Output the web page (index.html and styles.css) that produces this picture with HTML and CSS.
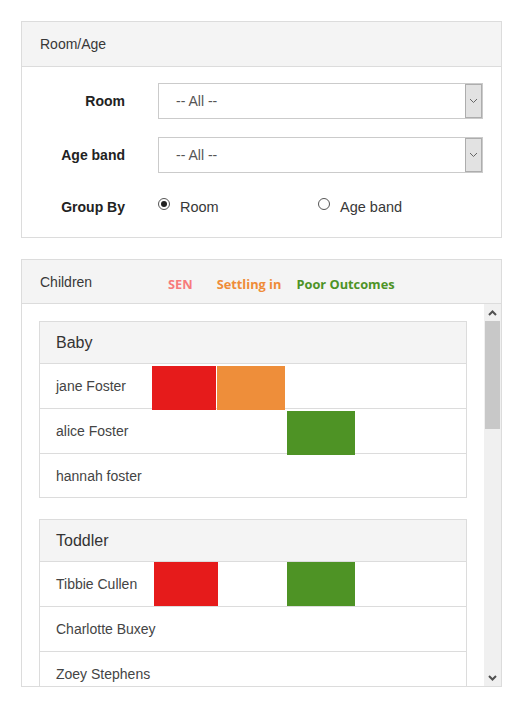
FILE: index.html
```html
<!DOCTYPE html>
<html>
<head>
<meta charset="utf-8">
<link rel="stylesheet" href="styles.css">
</head>
<body>
<div class="page">
  <section class="panel filters">
    <div class="panel-head">Room/Age</div>
    <div class="panel-body form">
      <div class="form-row">
        <label class="lbl">Room</label>
        <div class="select"><span class="select-val">-- All --</span><span class="select-btn"><svg width="9" height="6" viewBox="0 0 9 6"><path d="M1 1l3.5 3.5L8 1" fill="none" stroke="#666" stroke-width="1"/></svg></span></div>
      </div>
      <div class="form-row">
        <label class="lbl">Age band</label>
        <div class="select"><span class="select-val">-- All --</span><span class="select-btn"><svg width="9" height="6" viewBox="0 0 9 6"><path d="M1 1l3.5 3.5L8 1" fill="none" stroke="#666" stroke-width="1"/></svg></span></div>
      </div>
      <div class="form-row radio-row">
        <label class="lbl">Group By</label>
        <div class="radios">
          <span class="radio-opt"><span class="radio checked"></span>Room</span>
          <span class="radio-opt"><span class="radio"></span>Age band</span>
        </div>
      </div>
    </div>
  </section>

  <section class="panel children">
    <div class="panel-head children-head">
      <span class="head-title">Children</span>
      <span class="legend sen">SEN</span>
      <span class="legend settle">Settling in</span>
      <span class="legend po">Poor Outcomes</span>
    </div>
    <div class="scroll-body">
      <div class="scroll-content">
        <div class="group baby">
          <div class="group-head">Baby</div>
          <div class="row"><span class="name">jane Foster</span><span class="slot s-sen on"></span><span class="slot s-settle on"></span><span class="slot s-po"></span></div>
          <div class="row"><span class="name">alice Foster</span><span class="slot s-sen"></span><span class="slot s-settle"></span><span class="slot s-po on"></span></div>
          <div class="row"><span class="name">hannah foster</span></div>
        </div>
        <div class="group toddler">
          <div class="group-head">Toddler</div>
          <div class="row"><span class="name">Tibbie Cullen</span><span class="slot s-sen on"></span><span class="slot s-settle"></span><span class="slot s-po on"></span></div>
          <div class="row"><span class="name">Charlotte Buxey</span></div>
          <div class="row"><span class="name">Zoey Stephens</span></div>
        </div>
      </div>
      <div class="scrollbar">
        <div class="sb-btn"><svg width="9" height="6" viewBox="0 0 9 6"><path d="M1 5l3.5-3.5L8 5" fill="none" stroke="#505050" stroke-width="2"/></svg></div>
        <div class="sb-track"><div class="sb-thumb"></div></div>
        <div class="sb-btn"><svg width="9" height="6" viewBox="0 0 9 6"><path d="M1 1l3.5 3.5L8 1" fill="none" stroke="#505050" stroke-width="2"/></svg></div>
      </div>
    </div>
  </section>
</div>
</body>
</html>
```

FILE: styles.css
```css
html, body {
  margin: 0;
  padding: 0;
  background: #fff;
}
body {
  font-family: "Liberation Sans", Arial, sans-serif;
  font-size: 14px;
  color: #333;
}
.page {
  padding: 21px 0 0 21px;
  width: 481px;
}
.panel {
  border: 1px solid #dcdcdc;
  background: #fff;
}
.panel-head {
  height: 44px;
  background: #f4f4f4;
  border-bottom: 1px solid #dcdcdc;
  padding-left: 18px;
  display: flex;
  align-items: center;
  color: #383838;
  font-size: 14px;
}

/* filter form */
.form {
  padding: 16px 18px 20px 0;
  display: flex;
  flex-direction: column;
  gap: 18px;
}
.form-row {
  display: grid;
  grid-template-columns: 103px 1fr;
  column-gap: 33px;
  align-items: center;
}
.lbl {
  text-align: right;
  font-weight: bold;
  color: #222;
  font-size: 14px;
}
.select {
  height: 34px;
  border: 1px solid #cbcbcb;
  display: flex;
  align-items: stretch;
  background: #fff;
}
.select-val {
  flex: 1;
  padding-left: 17px;
  display: flex;
  align-items: center;
  color: #555;
  font-size: 14px;
}
.select-btn {
  width: 15px;
  background: #e2e2e2;
  border: 1px solid #adadad;
  display: flex;
  align-items: center;
  justify-content: center;
}
.radio-row {
  margin-top: 6px;
  height: 20px;
}
.radios {
  display: flex;
  align-items: center;
}
.radio-opt {
  width: 160px;
  display: flex;
  align-items: center;
  color: #383838;
  font-size: 14.5px;
}
.radio {
  width: 12px;
  height: 12px;
  border: 1px solid #555;
  border-radius: 50%;
  margin-right: 10px;
  box-sizing: border-box;
  position: relative;
  top: -3px;
  background: #fff;
  display: flex;
  align-items: center;
  justify-content: center;
}
.radio.checked::after {
  content: "";
  width: 6px;
  height: 6px;
  border-radius: 50%;
  background: #222;
}

/* children panel */
.children {
  margin-top: 21px;
}
.children-head {
  height: 43px;
}
.head-title {
  width: 128px;
}
.legend {
  font-family: "Open Sans", sans-serif;
  font-weight: bold;
  font-size: 12.8px;
  padding-top: 5px;
}
.legend.sen { color: #f77b7b; margin-right: 24px; }
.legend.settle { color: #ef8c38; margin-right: 15px; }
.legend.po { color: #4d9326; }

.scroll-body {
  height: 382px;
  display: flex;
  overflow: hidden;
}
.scroll-content {
  flex: 1;
  padding: 17px 17px 0 17px;
  overflow: hidden;
}
.group {
  border: 1px solid #dcdcdc;
  margin-bottom: 21px;
}
.group-head {
  height: 41px;
  background: #f4f4f4;
  padding-left: 16px;
  display: flex;
  align-items: center;
  font-size: 16px;
  color: #333;
}
.row {
  height: 44px;
  border-top: 1px solid #dcdcdc;
  display: flex;
  align-items: stretch;
}
.group .row:last-child {
  height: 43px;
}
.name {
  width: 96px;
  padding-left: 16px;
  display: flex;
  align-items: center;
  color: #444;
  font-size: 14px;
  white-space: nowrap;
}
.toddler .name {
  width: 98px;
}
.slot {
  width: 68px;
}
.slot.s-sen { width: 64px; }
.slot.s-settle { margin-left: 1px; }
.slot.s-po { margin-left: 2px; }
.toddler .slot.s-po { margin-left: 0; }
.toddler .slot.s-settle { margin-left: 1px; }
.s-sen.on { background: #e61b1b; }
.s-settle.on { background: #ee8e3a; }
.s-po.on { background: #4e9325; }
.baby .row .slot.on {
  margin-top: 2px;
  margin-bottom: -2px;
}

/* scrollbar */
.scrollbar {
  width: 17px;
  background: #f0f0f0;
  display: flex;
  flex-direction: column;
}
.sb-btn {
  height: 17px;
  display: flex;
  align-items: center;
  justify-content: center;
}
.sb-track {
  flex: 1;
  padding: 0 1px;
}
.sb-thumb {
  height: 108px;
  background: #c8c8c8;
}
```
